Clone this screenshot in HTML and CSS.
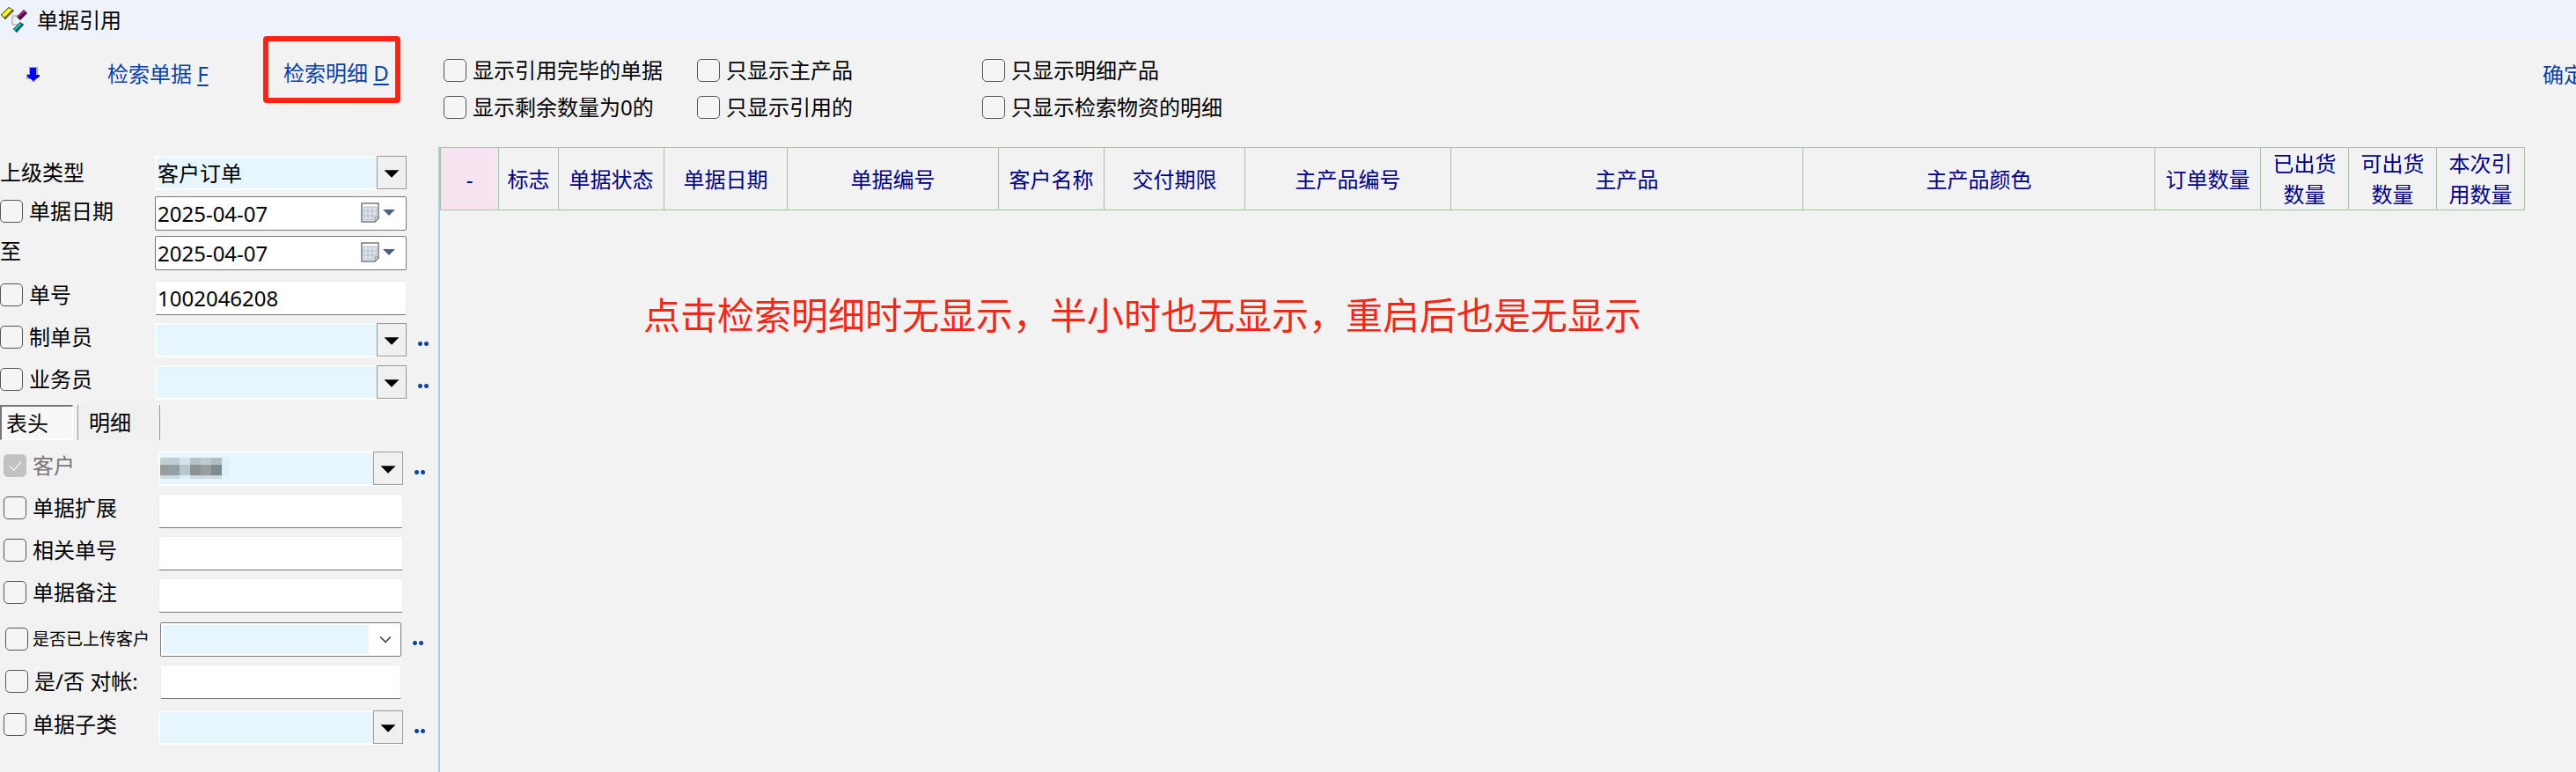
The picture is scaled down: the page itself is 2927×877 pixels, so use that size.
FILE: index.html
```html
<!DOCTYPE html>
<html lang="zh-CN">
    <head>
        <meta charset="UTF-8">
        <title>单据引用</title>
        <link rel="stylesheet" href="styles.css">
    </head>
    <body>
        <!-- 标题栏 -->
        <header class="titlebar">
            <svg class="logo" width="32" height="32" viewBox="0 0 32 32">
                <path d="M14 11H22M14 11V21H20" fill="none" stroke="#999" stroke-width="1"></path>
                <path d="M1 10L10 1L16 5L6 15Z" fill="#111"></path>
                <path d="M2 10L10 2L14 4L5 13Z" fill="#ffff00"></path>
                <path d="M6 13L14 5L15 6L7 14Z" fill="#8a8a00"></path>
                <path d="M19 12L27 4L31 8L23 16Z" fill="#111"></path>
                <path d="M20 12L27 5L29 6L21 13Z" fill="#e010c0"></path>
                <path d="M22 14L29 7L30 8L23 15Z" fill="#80006a"></path>
                <path d="M15 26L23 18L27 21L19 30Z" fill="#111"></path>
                <path d="M16 26L23 19L25 20L17 28Z" fill="#10d8d8"></path>
                <path d="M18 28L25 21L26 22L19 29Z" fill="#008080"></path>
            </svg>
            <h1>单据引用</h1>
        </header>

        <!-- 工具栏 -->
        <div class="toolbar">
            <button class="arrow" aria-label="向下">
                <svg width="18" height="18" viewBox="0 0 18 18">
                    <path d="M4 0H14V9H11V17H7V14H1V8H4Z" fill="#aaa"></path>
                    <path d="M5 1H12V9H16V11L9 16L2 11V9H5Z" fill="#0000ff"></path>
                </svg>
            </button>
            <a class="search" href="#">检索单据 <u>F</u></a>
            <a class="search marked" href="#">检索明细 <u>D</u></a>
            <div class="options">
                <label><input type="checkbox">显示引用完毕的单据</label>
                <label><input type="checkbox">只显示主产品</label>
                <label><input type="checkbox">只显示明细产品</label>
                <label><input type="checkbox">显示剩余数量为0的</label>
                <label><input type="checkbox">只显示引用的</label>
                <label><input type="checkbox">只显示检索物资的明细</label>
            </div>
            <a class="confirm" href="#">确定</a>
        </div>

        <div class="main">
            <!-- 左侧检索条件 -->
            <form class="filters">
                <div class="group">
                    <div class="row type-row">
                        <label for="type">上级类型</label>
                        <div class="combo">
                            <select id="type"><option>客户订单</option></select>
                            <svg class="drop" viewBox="0 0 34 38"><path d="M8 16H26L17 25Z"></path></svg>
                        </div>
                    </div>
                    <div class="row date-row">
                        <label><input type="checkbox">单据日期</label>
                        <div class="date">
                            <input type="text" value="2025-04-07" aria-label="开始日期">
                            <svg class="cal" width="40" height="24" viewBox="0 0 40 24">
                                <path d="M1 1H20V18L16 22H1Z" fill="#fff" stroke="#777" stroke-width="1.5"></path>
                                <path d="M3 5H18V17H15V20H3Z" fill="#dfe3ec"></path>
                                <path d="M3 5H18M3 10H18M3 15H18M3 20H14M3 5V20M8 5V20M13 5V20M18 5V16" fill="none" stroke="#b4bccb"></path>
                                <path d="M20 17H16V22" fill="none" stroke="#777"></path>
                                <path d="M25 8H39L32 15Z" fill="#4c5f88"></path>
                            </svg>
                        </div>
                    </div>
                    <div class="row date-row">
                        <label for="date-end">至</label>
                        <div class="date">
                            <input type="text" value="2025-04-07" id="date-end">
                            <svg class="cal" width="40" height="24" viewBox="0 0 40 24">
                                <path d="M1 1H20V18L16 22H1Z" fill="#fff" stroke="#777" stroke-width="1.5"></path>
                                <path d="M3 5H18V17H15V20H3Z" fill="#dfe3ec"></path>
                                <path d="M3 5H18M3 10H18M3 15H18M3 20H14M3 5V20M8 5V20M13 5V20M18 5V16" fill="none" stroke="#b4bccb"></path>
                                <path d="M20 17H16V22" fill="none" stroke="#777"></path>
                                <path d="M25 8H39L32 15Z" fill="#4c5f88"></path>
                            </svg>
                        </div>
                    </div>
                    <div class="row spaced">
                        <label><input type="checkbox">单号</label>
                        <input class="text" type="text" value="1002046208" aria-label="单号">
                    </div>
                    <div class="row">
                        <label><input type="checkbox">制单员</label>
                        <div class="combo">
                            <select aria-label="制单员"><option></option></select>
                            <svg class="drop" viewBox="0 0 34 38"><path d="M8 16H26L17 25Z"></path></svg>
                        </div>
                        <button class="more" type="button" aria-label="更多"></button>
                    </div>
                    <div class="row">
                        <label><input type="checkbox">业务员</label>
                        <div class="combo">
                            <select aria-label="业务员"><option></option></select>
                            <svg class="drop" viewBox="0 0 34 38"><path d="M8 16H26L17 25Z"></path></svg>
                        </div>
                        <button class="more" type="button" aria-label="更多"></button>
                    </div>
                </div>

                <div class="tabs">
                    <button class="tab active" type="button">表头</button>
                    <button class="tab" type="button">明细</button>
                </div>

                <div class="group detail">
                    <div class="row">
                        <label class="disabled"><input type="checkbox" checked disabled>客户</label>
                        <div class="combo">
                            <select aria-label="客户"><option></option></select>
                            <svg class="drop" viewBox="0 0 34 38"><path d="M8 16H26L17 25Z"></path></svg>
                            <!-- 客户名打码 -->
                            <svg class="mosaic" width="78" height="26" viewBox="0 0 78 26" shape-rendering="crispEdges">
                                <path d="M0 0H10V8H0Z" fill="#c5ced1"></path>
                                <path d="M10 0H22V8H10Z" fill="#bfccd4"></path>
                                <path d="M22 0H34V8H22Z" fill="#d5e2e8"></path>
                                <path d="M34 0H46V8H34Z" fill="#b7c3c8"></path>
                                <path d="M46 0H58V8H46Z" fill="#c0cbcd"></path>
                                <path d="M58 0H70V8H58Z" fill="#b0bfc5"></path>
                                <path d="M0 8H10V20H0Z" fill="#979b9b"></path>
                                <path d="M10 8H22V20H10Z" fill="#94a0a8"></path>
                                <path d="M22 8H34V20H22Z" fill="#b9c7cd"></path>
                                <path d="M34 8H46V20H34Z" fill="#899295"></path>
                                <path d="M46 8H58V20H46Z" fill="#979e9b"></path>
                                <path d="M58 8H70V20H58Z" fill="#7e8b92"></path>
                                <path d="M0 20H22V24H0ZM34 20H70V24H34Z" fill="#cfdce1"></path>
                                <path d="M70 0H78V20H70ZM22 20H34V24H22Z" fill="#dcf0f6"></path>
                            </svg>
                        </div>
                        <button class="more" type="button" aria-label="更多"></button>
                    </div>
                    <div class="row">
                        <label><input type="checkbox">单据扩展</label>
                        <input class="text" type="text" aria-label="单据扩展">
                    </div>
                    <div class="row">
                        <label><input type="checkbox">相关单号</label>
                        <input class="text" type="text" aria-label="相关单号">
                    </div>
                    <div class="row">
                        <label><input type="checkbox">单据备注</label>
                        <input class="text" type="text" aria-label="单据备注">
                    </div>
                    <div class="row inset first-inset">
                        <label class="small"><input type="checkbox"><span>是否已上传客户</span></label>
                        <div class="combo outlined">
                            <select aria-label="是否已上传客户"><option></option></select>
                            <svg class="drop" viewBox="0 0 34 38"><path d="M11 16L17 22L23 16"></path></svg>
                        </div>
                        <button class="more" type="button" aria-label="更多"></button>
                    </div>
                    <div class="row inset">
                        <label><input type="checkbox">是/否 对帐:</label>
                        <input class="text" type="text" aria-label="是/否 对帐">
                    </div>
                    <div class="row spaced">
                        <label><input type="checkbox">单据子类</label>
                        <div class="combo">
                            <select aria-label="单据子类"><option></option></select>
                            <svg class="drop" viewBox="0 0 34 38"><path d="M8 16H26L17 25Z"></path></svg>
                        </div>
                        <button class="more" type="button" aria-label="更多"></button>
                    </div>
                </div>
            </form>

            <!-- 右侧结果表 -->
            <div class="result">
                <table>
                    <colgroup>
                        <col class="w-66"><col class="w-68"><col class="w-120"><col class="w-140"><col class="w-240">
                        <col class="w-120"><col class="w-160"><col class="w-234"><col class="w-400"><col class="w-400">
                        <col class="w-120"><col class="w-100"><col class="w-100"><col class="w-100">
                    </colgroup>
                    <thead>
                        <tr>
                            <th class="pink">-</th>
                            <th>标志</th>
                            <th>单据状态</th>
                            <th>单据日期</th>
                            <th>单据编号</th>
                            <th>客户名称</th>
                            <th>交付期限</th>
                            <th>主产品编号</th>
                            <th>主产品</th>
                            <th>主产品颜色</th>
                            <th>订单数量</th>
                            <th class="wrap">已出货数量</th>
                            <th class="wrap">可出货数量</th>
                            <th class="wrap">本次引用数量</th>
                        </tr>
                    </thead>
                </table>
                <p class="note">点击检索明细时无显示，半小时也无显示，重启后也是无显示</p>
            </div>
        </div>
    </body>
</html>
```
FILE: styles.css
```css
* {
    box-sizing: border-box;
}

body {
    margin: 0;
    min-height: 100vh;
    display: flex;
    flex-direction: column;
    overflow: hidden;
    background-color: #f2f2f2;
    color: #000;
    font-family: "Noto Sans", "Noto Sans CJK SC", sans-serif;
    font-size: 24px;
    line-height: 36px;
}

input, select, button {
    font: inherit;
    color: inherit;
    margin: 0;
    padding: 0;
}

button {
    border: none;
    background: none;
}

a {
    color: #0a43a3;
    text-decoration: none;
}

/* 标题栏 */
.titlebar {
    display: flex;
    align-items: center;
    gap: 10px;
    height: 45px;
    background-color: #eef3fb;
}

.titlebar h1 {
    margin: 0;
    font-size: 24px;
    font-weight: normal;
}

/* 工具栏 */
.toolbar {
    display: flex;
    align-items: flex-start;
    height: 122px;
    white-space: nowrap;
}

.arrow {
    width: 92px;
    height: 80px;
    padding-left: 29px;
    text-align: left;
    line-height: 0;
}

.search {
    height: 76px;
    width: 156px;
    padding-left: 30px;
    line-height: 78px;
}

.search u {
    text-underline-offset: 3px;
}

.marked {
    margin: -4px 49px 0 51px;
    padding-left: 17px;
    border: 6px solid #fb2314;
    border-radius: 4px;
    line-height: 72px;
}

.options {
    display: grid;
    grid-template-columns: 288px 324px auto;
    row-gap: 6px;
    padding-top: 17px;
}

.confirm {
    margin-left: auto;
    margin-right: -10px;
    line-height: 80px;
}

label {
    display: flex;
    align-items: center;
    gap: 7px;
}

input[type="checkbox"] {
    appearance: none;
    flex: none;
    width: 26px;
    height: 26px;
    border: 1px solid #555;
    border-radius: 5px;
    background-color: #f5f5f5;
}

input[type="checkbox"]:disabled {
    border-color: #c2c2c2;
    background-color: #c2c2c2;
}

input[type="checkbox"]:disabled::before {
    content: "";
    display: block;
    width: 6px;
    height: 12px;
    margin: 4px 0 0 9px;
    border: solid #fff;
    border-width: 0 1px 1px 0;
    transform: rotate(42deg);
}

.main {
    flex: 1;
    display: flex;
}

/* 检索条件 */
.filters {
    flex: none;
    width: 500px;
    border-right: 2px solid #a9c8ec;
}

.group {
    padding-top: 5px;
}

.row {
    display: grid;
    grid-template-columns: 176px 286px 36px;
    align-items: center;
    height: 48px;
}

.row label {
    margin-bottom: 6px;
}

.row.type-row label, .row.inset label {
    margin-bottom: 0;
}

.date-row {
    height: 45px;
}

.spaced {
    height: 52px;
    padding-top: 4px;
}

.combo, .date {
    position: relative;
    height: 39px;
}

.combo select {
    appearance: none;
    width: 100%;
    height: 39px;
    padding-left: 1px;
    border: 2px solid #f5fcfe;
    border-bottom-color: #fff;
    border-radius: 0;
    background-color: #e7f6fd;
    line-height: 33px;
    outline: 0;
}

.drop {
    position: absolute;
    top: 0;
    right: 0;
    width: 34px;
    height: 38px;
    border: 1px solid #999;
    background-color: #f0f0f0;
    pointer-events: none;
}

.outlined {
    border: 1px solid #777;
    border-radius: 2px;
    background-color: #fff;
}

.outlined select {
    height: 37px;
    border: 2px solid #fff;
    border-right-width: 36px;
}

.outlined .drop {
    height: 37px;
    border: none;
    background: none;
    fill: none;
    stroke: #333;
    stroke-width: 1.5;
}

.mosaic {
    position: absolute;
    top: 7px;
    left: 2px;
}

.date input {
    width: 100%;
    height: 39px;
    padding-left: 2px;
    border: 1px solid #777;
    border-radius: 2px;
    background-color: #fff;
}

.cal {
    position: absolute;
    top: 7px;
    right: 12px;
}

.text {
    width: 100%;
    height: 39px;
    padding-left: 2px;
    border: 1px solid #ececec;
    border-bottom-color: #777;
    border-radius: 2px;
    background-color: #fff;
}

.more {
    width: 13px;
    height: 5px;
    margin: 8px 0 0 12px;
    background: radial-gradient(circle, #0a43a3 2px, transparent 3px) 0 0 / 7px 5px;
}

/* 页签 */
.tabs {
    display: flex;
    height: 40px;
    margin-top: 2px;
}

.tab {
    width: 94px;
    padding-left: 12px;
    border-right: 1px solid #999;
    background-color: #f0f0f0;
    text-align: left;
}

.tab.active {
    width: 83px;
    margin-right: 5px;
    padding-left: 5px;
    border: 1px solid #fff;
    border-top: 2px solid #777;
    border-left: 2px solid #777;
    background-color: #f8f8f8;
}

.tab.active + .tab {
    border-left: 1px solid #999;
}

.detail {
    padding-top: 8px;
}

.detail .row {
    grid-template-columns: 176px 278px 40px;
    padding-left: 4px;
}

.detail .inset {
    grid-template-columns: 176px 274px 42px;
    padding-left: 6px;
}

.detail .first-inset {
    height: 50px;
    padding-top: 2px;
}

.disabled {
    color: #777;
}

.small {
    gap: 5px;
    padding-right: 12px;
    font-size: 19px;
}

.small span {
    overflow: hidden;
    white-space: nowrap;
}

/* 结果表 */
.result {
    flex: 1;
    min-width: 0;
}

table {
    width: 2369px;
    table-layout: fixed;
    border-collapse: collapse;
    color: #000080;
}

th {
    height: 71px;
    padding: 0;
    border: 1px solid #a3c4a0;
    font-weight: normal;
    line-height: 35px;
}

.wrap {
    padding: 0 12px;
}

.pink {
    background-color: #f6e5f0;
}

.w-66 { width: 66px; }
.w-68 { width: 68px; }
.w-100 { width: 100px; }
.w-120 { width: 120px; }
.w-140 { width: 140px; }
.w-160 { width: 160px; }
.w-234 { width: 234px; }
.w-240 { width: 240px; }
.w-400 { width: 400px; }

/* 红字说明 */
.note {
    margin: 88px 0 0 231px;
    color: #f02818;
    font-size: 42px;
    line-height: 62px;
}
```
